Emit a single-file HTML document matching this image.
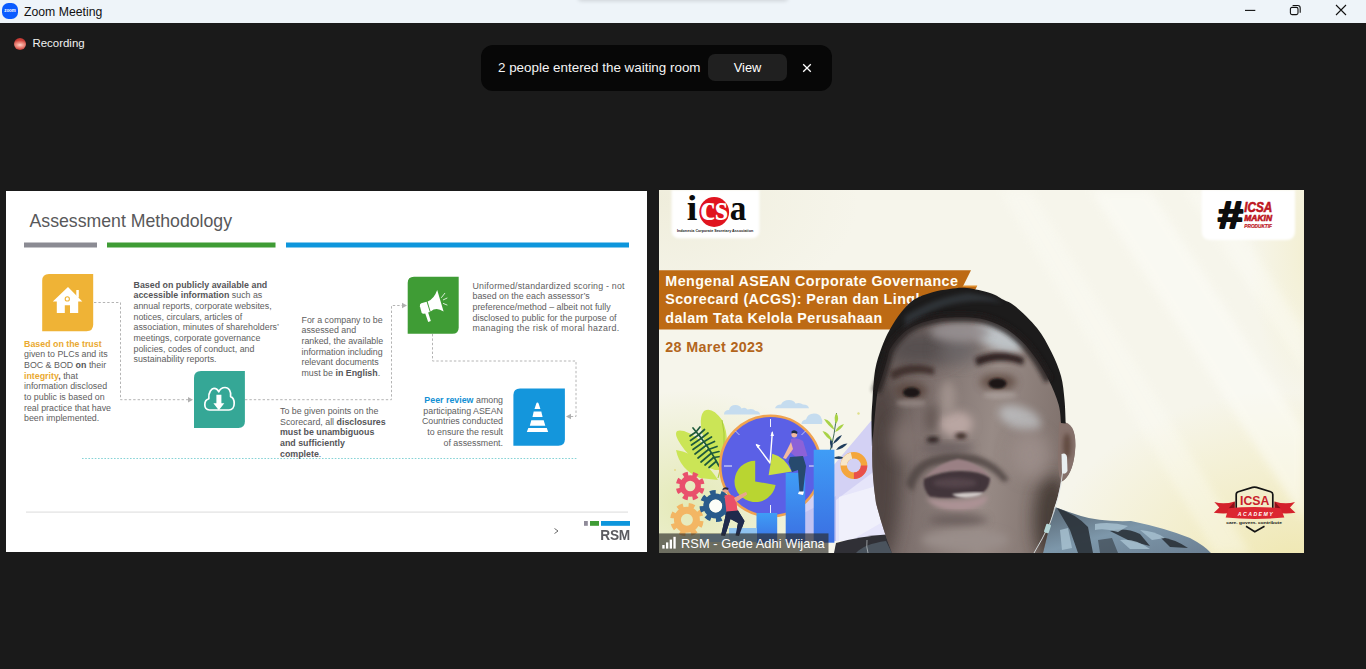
<!DOCTYPE html>
<html lang="en">
<head>
<meta charset="utf-8">
<title>Zoom Meeting</title>
<style>
*{box-sizing:border-box;margin:0;padding:0}
html,body{width:1366px;height:669px;overflow:hidden;background:#1a1a1a;font-family:"Liberation Sans","DejaVu Sans",sans-serif}
#app{position:relative;width:1366px;height:669px;background:#1a1a1a;overflow:hidden}
/* title bar */
#titlebar{position:absolute;left:0;top:0;width:1366px;height:23px;background:#eef4f9;overflow:hidden}
#titlebar .logo{position:absolute;left:2px;top:3px;width:16px;height:16px;border-radius:6.5px;background:#0b5cff;color:#fff;font-size:4.5px;font-weight:bold;line-height:16px;text-align:center;letter-spacing:-0.1px}
#titlebar .ttl{position:absolute;left:24px;top:5px;font-size:12.25px;line-height:15px;color:#111;white-space:nowrap}
#titlebar svg{position:absolute;top:0}
/* recording */
#rec{position:absolute;left:14px;top:37px;height:13px;width:80px}
#rec .dot{position:absolute;left:0;top:0.5px;width:12px;height:12px;border-radius:50%;background:radial-gradient(ellipse 75% 40% at 50% 58%,#ffd6cf 0,#f29a8d 35%,rgba(220,80,70,0) 100%),radial-gradient(circle at 50% 50%,#d9483f 0,#c93c36 60%,#8a2a26 100%)}
#rec .txt{position:absolute;left:18.5px;top:-1px;font-size:11.45px;line-height:15px;color:#f2f2f2;white-space:nowrap}
/* toast */
#toast{position:absolute;left:481px;top:44.5px;width:351px;height:46px;border-radius:12px;background:#070707}
#toast .msg{position:absolute;left:17px;top:14px;font-size:13.4px;line-height:17px;color:#f5f5f5;white-space:nowrap}
#toast .btn{position:absolute;left:227px;top:9.5px;width:79px;height:27px;border-radius:7px;background:#202020;color:#fff;font-size:12.8px;line-height:27px;text-align:center}
#toast svg{position:absolute;left:321px;top:18px}
/* slide */
#slide{position:absolute;left:6px;top:191px;width:641px;height:361px;background:#fff;overflow:hidden}
/* video */
#video{position:absolute;left:659px;top:190px;width:645px;height:363px;background:#f4f2e3;overflow:hidden}
    #slide .t{position:absolute;white-space:nowrap;color:#5e5e60;font-size:8.86px;line-height:10.7px}
    #slide .t b{color:#555558}
    #slide h1{position:absolute;left:23.5px;top:19.8px;font-size:17.7px;line-height:20px;font-weight:normal;color:#58585a;white-space:nowrap}
    #slide .y, #slide b.y{color:#eaa930}
    #slide b.bl{color:#1290d4}
    #slide .rsm{position:absolute;left:594.3px;top:336.6px;font-size:13.7px;line-height:14px;font-weight:bold;color:#5b5b60;letter-spacing:-0.3px;transform:scaleY(1.12);transform-origin:0 0}
</style>
</head>
<body>
<div id="app">
  <div id="titlebar">
    <div class="logo">zoom</div>
    <div class="ttl">Zoom Meeting</div>
    <div style="position:absolute;left:578px;top:-7px;width:210px;height:7px;border-radius:4px;box-shadow:0 1px 4px rgba(0,0,0,0.14)"></div>
    <svg style="left:1240px" width="120" height="23" viewBox="0 0 120 23" fill="none" stroke="#111" stroke-width="1.1">
      <path d="M5 10.4H15.3"/>
      <rect x="50.4" y="7.4" width="7.6" height="7.2" rx="1.6"/>
      <path d="M52.6 5.5H57.8Q60.2 5.5 60.2 7.9V12.8"/>
      <path d="M96 5L106 15M106 5L96 15"/>
    </svg>
  </div>

  <div id="rec"><div class="dot"></div><div class="txt">Recording</div></div>

  <div id="toast">
    <div class="msg">2 people entered the waiting room</div>
    <div class="btn">View</div>
    <svg width="10" height="10" viewBox="0 0 10 10" stroke="#fff" stroke-width="1.3" fill="none"><path d="M1.2 1.2L8.8 8.8M8.8 1.2L1.2 8.8"/></svg>
  </div>

  <div id="slide">
<!--SLIDE-START-->
    <svg style="position:absolute;left:0;top:0" width="641" height="361" viewBox="6 191 641 361">
      <!-- top bars -->
      <rect x="24" y="242.5" width="73" height="5" fill="#8b8b93"/>
      <rect x="107" y="242.5" width="168.5" height="5" fill="#3f9c35"/>
      <rect x="286" y="242.5" width="343" height="5" fill="#0e96dc"/>
      <!-- connectors -->
      <g fill="none" stroke="#b4b4b4" stroke-width="1" stroke-dasharray="2.4 2">
        <path d="M94 302.500H120.500V399.700H188"/>
        <path d="M245 399.700H391.500V305.500H402"/>
        <path d="M432.5 334V361H576V416.5H571"/>
      </g>
      <g fill="#b0b0b0">
        <path d="M188 397L193 399.700L188 402.400Z"/>
        <path d="M402 302.800L407 305.500L402 308.200Z"/>
        <path d="M571 413.800L566 416.500L571 419.200Z"/>
      </g>
      <path d="M82 458.5H578" stroke="#86d3d6" stroke-width="1" stroke-dasharray="1.6 1.6" fill="none"/>
      <!-- icon tiles -->
      <path d="M49 274H93.2V324.5Q93.2 331.2 86.5 331.2H42.2V280.8Q42.2 274 49 274Z" fill="#efb336"/>
      <path d="M201 371H244.900V421.500Q244.900 428 238.400 428H194V378Q194 371 201 371Z" fill="#35a796"/>
      <path d="M414 276.800H458.700V327.500Q458.700 333.800 452.400 333.800H407.700V283Q407.700 276.800 414 276.800Z" fill="#3f9c35"/>
      <path d="M520 388.500H564.900V439.300Q564.900 445.800 558.400 445.800H513.400V395.100Q513.400 388.500 520 388.500Z" fill="#1496dc"/>
      <!-- house -->
      <g fill="#fff">
        <path d="M68 287.100L82.300 301.600H78.200V313H70V305.200H64.800V313H56.800V301.600H52.800Z"/>
        <rect x="76.300" y="290" width="2.500" height="7.500"/>
      </g>
      <circle cx="67.300" cy="298.900" r="2.100" fill="#fff" stroke="#efb336" stroke-width="1.100"/>
      <!-- cloud download -->
      <path d="M209.500 410C206 410 204.800 407 204.800 404.800C204.800 401 207 399.300 208.800 398.800C208 392 212 388.300 214 388.300C216.500 388.300 218 390 218.700 391.800C220 389 222.500 387.500 225 387.500C229 387.500 231.300 391.500 230.600 396.600C233 397.500 234.200 400.500 234.200 403.500C234.200 407.500 232 410 229 410Z" fill="none" stroke="#fff" stroke-width="1.700" stroke-linejoin="round"/>
      <path d="M216.400 394.800H221.400V403.200H224.300L218.800 410.300L213.400 403.200H216.400Z" fill="#fff"/>
      <!-- megaphone -->
      <g fill="#fff">
        <path d="M421.300 303.300L426.600 301.700L429.800 312L424.200 313.800Q422.300 314.200 421.500 312.200L419.900 306.200Q419.500 304 421.300 303.300Z"/>
        <path d="M427.600 301.500Q434.300 298.500 437.200 289.900L443.600 311.600Q436.500 306.500 430.600 311.400Z"/>
        <path d="M425 312.700L427.900 311.800L430.800 321L428.200 322Z"/>
      </g>
      <g stroke="#fff" stroke-width="0.800" fill="none" stroke-linecap="round"><path d="M441.500 297.500L444.800 293.300M443.400 299.800L447 298.100M443.400 303.500L447 305"/></g>
      <!-- cone -->
      <g fill="#fff">
        <path d="M537.400 402.400Q538.300 402.400 538.600 403.500L540.400 409H534.500L536.300 403.500Q536.600 402.400 537.400 402.400Z"/>
        <path d="M533.700 411.600H541.300L542.600 417H532.500Z"/>
        <path d="M531.300 420.200H543.700L545.300 425.700H529.800Z"/>
        <path d="M528.300 428H546.800L548.200 432H526.800Z"/>
      </g>
      <!-- footer -->
      <rect x="26" y="511.500" width="602" height="1.200" fill="#e2e2e2"/>
      <rect x="584" y="521" width="3.800" height="4.800" fill="#8f8b99"/>
      <rect x="590" y="521" width="9" height="4.800" fill="#3f9c35"/>
      <rect x="601" y="521" width="29" height="4.800" fill="#0e96dc"/>
      <path d="M554.500 528.500L558 531L554.500 533.500" stroke="#444" stroke-width="0.8" fill="none"/>
    </svg>
    <h1>Assessment Methodology</h1>
    <div class="t" style="left:18px;top:147.500px"><b class="y">Based on the trust</b><br>given to PLCs and its<br>BOC &amp; BOD <b>on</b> their<br><b class="y">integrity</b><b>,</b> that<br>information disclosed<br>to public is based on<br>real practice that have<br>been implemented.</div>
    <div class="t" style="left:127.500px;top:88.500px"><b>Based on publicly available and</b><br><b>accessible information</b> such as<br>annual reports, corporate websites,<br>notices, circulars, articles of<br>association, minutes of shareholders’<br>meetings, corporate governance<br>policies, codes of conduct, and<br>sustainability reports.</div>
    <div class="t" style="left:295.500px;top:123.500px">For a company to be<br>assessed and<br>ranked, the available<br>information including<br>relevant documents<br>must be <b>in English</b>.</div>
    <div class="t" style="left:274px;top:215px">To be given points on the<br>Scorecard, all <b>disclosures</b><br><b>must be unambiguous</b><br><b>and sufficiently</b><br><b>complete</b>.</div>
    <div class="t" style="left:466.500px;top:89.500px"><span style="letter-spacing:0.2px">Uniformed/standardized scoring - not</span><br>based on the each assessor’s<br>preference/method – albeit not fully<br>disclosed to public for the purpose of<br><span style="letter-spacing:0.32px">managing the risk of moral hazard.</span></div>
    <div class="t" style="right:144px;top:204px;text-align:right"><b class="bl">Peer review</b> among<br>participating ASEAN<br>Countries conducted<br>to ensure the result<br>of assessment.</div>
    <div class="rsm">RSM</div>
<!--SLIDE-END-->
  </div>

  <div id="video">
<!--VIDEO-START-->
    <svg style="position:absolute;left:0;top:0" width="645" height="363" viewBox="659 190 645 363" font-family="'Liberation Sans','DejaVu Sans',sans-serif">
      <defs>
        <linearGradient id="vbg" x1="0" y1="0" x2="1" y2="1">
          <stop offset="0" stop-color="#f1efdf"/><stop offset="0.35" stop-color="#f6f5ea"/><stop offset="0.7" stop-color="#f5f3e1"/><stop offset="1" stop-color="#f3ecc2"/>
        </linearGradient>
        <radialGradient id="glowY" cx="0.5" cy="0.5" r="0.5"><stop offset="0" stop-color="#efe7b0" stop-opacity="1"/><stop offset="0.5" stop-color="#f1eabb" stop-opacity="0.6"/><stop offset="1" stop-color="#f2ebb8" stop-opacity="0"/></radialGradient>
        <radialGradient id="glowG" cx="0.5" cy="0.5" r="0.5"><stop offset="0" stop-color="#e3e9b4" stop-opacity="0.95"/><stop offset="1" stop-color="#e3e9b4" stop-opacity="0"/></radialGradient>
        <radialGradient id="glowT" cx="0.5" cy="0.5" r="0.5"><stop offset="0" stop-color="#efeddb" stop-opacity="0.95"/><stop offset="1" stop-color="#efeddb" stop-opacity="0"/></radialGradient>
        <radialGradient id="glowW" cx="0.5" cy="0.5" r="0.5"><stop offset="0" stop-color="#fbfaf4" stop-opacity="0.95"/><stop offset="1" stop-color="#fbfaf4" stop-opacity="0"/></radialGradient>
        <linearGradient id="bar" x1="0" y1="0" x2="0" y2="1"><stop offset="0" stop-color="#3f9df6"/><stop offset="1" stop-color="#3b6fe2"/></linearGradient>
        <filter id="b1" x="-20%" y="-20%" width="140%" height="140%"><feGaussianBlur stdDeviation="1"/></filter>
        <filter id="b2" x="-30%" y="-30%" width="160%" height="160%"><feGaussianBlur stdDeviation="2.2"/></filter>
        <filter id="b4" x="-40%" y="-40%" width="180%" height="180%"><feGaussianBlur stdDeviation="4.5"/></filter>
        <filter id="b8" x="-50%" y="-50%" width="200%" height="200%"><feGaussianBlur stdDeviation="8"/></filter>
        <clipPath id="vclip"><rect x="659" y="190" width="645" height="363"/></clipPath>
      </defs>
      <g clip-path="url(#vclip)">
      <rect x="659" y="190" width="645" height="363" fill="#f6f5eb"/>
      <ellipse cx="659" cy="200" rx="200" ry="120" fill="url(#glowT)"/>
      <ellipse cx="1295" cy="565" rx="250" ry="175" fill="url(#glowY)"/>
      <ellipse cx="1310" cy="250" rx="60" ry="150" fill="url(#glowY)" opacity="0.450"/>
      <ellipse cx="690" cy="505" rx="150" ry="115" fill="url(#glowG)"/>
      <g filter="url(#b4)" fill="#fdfdf8" opacity="0.550">
        <path d="M1090 190H1150L1304 430V520Z"/>
        <path d="M1000 190H1030L1250 553H1215Z" opacity="0.600"/>
        <path d="M1185 190H1215L1304 330V370Z" opacity="0.700"/>
      </g>
      <!--VBG-END-->
      <!-- icsa logo (top-left) -->
      <path d="M671.600 190H759.400V230.500Q759.400 238.300 751.500 238.300H679.500Q671.600 238.300 671.600 230.500Z" fill="#ffffff" filter="url(#b1)"/>
      <circle cx="714.200" cy="212" r="14.900" fill="#e0141f"/>
      <g font-family="'Liberation Serif','DejaVu Serif',serif" font-weight="bold" font-size="36">
        <text x="686.800" y="220.300" fill="#0b0b0b" textLength="10.600" lengthAdjust="spacingAndGlyphs">i</text>
        <text x="700.300" y="220.300" fill="#ffffff" textLength="27.800" lengthAdjust="spacingAndGlyphs">cs</text>
        <text x="729.700" y="220.300" fill="#0b0b0b" textLength="16.600" lengthAdjust="spacingAndGlyphs">a</text>
      </g>
      <text x="677" y="232" font-size="3.700" font-weight="bold" fill="#222" textLength="76.200" lengthAdjust="spacingAndGlyphs">Indonesia Corporate Secretary Association</text>
      <!-- hashtag box (top-right) -->
      <path d="M1201.700 190H1295V231Q1295 240 1286 240H1210.700Q1201.700 240 1201.700 231Z" fill="#ffffff" filter="url(#b1)"/>
      <g font-weight="bold" font-style="italic">
        <text x="1217.300" y="227.900" font-size="37" fill="#0d0d0d" textLength="25" lengthAdjust="spacingAndGlyphs" stroke="#0d0d0d" stroke-width="1.900" stroke-linejoin="round">#</text>
        <text x="1244.300" y="211.900" font-size="14.400" fill="#bd1622" textLength="28" lengthAdjust="spacingAndGlyphs" stroke="#bd1622" stroke-width="0.600">ICSA</text>
        <text x="1244.300" y="220.800" font-size="8.800" fill="#bd1622" textLength="27.700" lengthAdjust="spacingAndGlyphs" stroke="#bd1622" stroke-width="0.600">MAKIN</text>
        <text x="1244.300" y="227.500" font-size="5" fill="#bd1622" textLength="27.700" lengthAdjust="spacingAndGlyphs" stroke="#bd1622" stroke-width="0.200">PRODUKTIF</text>
      </g>
      <!-- ICSA academy badge (bottom-right) -->
      <path d="M1236.200 508V494.500Q1236.200 492.300 1238.300 491.700L1252.500 487.400Q1254.500 486.800 1256.500 487.400L1270.700 491.700Q1272.800 492.300 1272.800 494.500V508" fill="none" stroke="#141414" stroke-width="1.700" stroke-linejoin="round"/>
      <text x="1240" y="505.100" font-size="13.400" font-weight="bold" fill="#c8202a" textLength="29.300" lengthAdjust="spacingAndGlyphs">ICSA</text>
      <path d="M1214.300 502Q1224 505 1234.700 501.400L1234.700 512.500Q1224 514.500 1213.800 512.800L1219.300 507.600Z" fill="#d4212b"/>
      <path d="M1295 502Q1285.300 505 1274.600 501.400L1274.600 512.500Q1285.300 514.500 1295.500 512.800L1290 507.600Z" fill="#d4212b"/>
      <path d="M1234.700 501.400L1228.500 508.500L1234.700 511Z" fill="#8a1118"/>
      <path d="M1274.600 501.400L1280.800 508.500L1274.600 511Z" fill="#8a1118"/>
      <path d="M1228.500 508.300Q1254.500 505.800 1280.800 508.300L1284.300 517.600Q1254.500 520.300 1225.700 517.600Z" fill="#dc2631"/>
      <text x="1237.800" y="516.400" font-size="5.200" font-weight="bold" font-style="italic" fill="#fff" textLength="35" lengthAdjust="spacing">ACADEMY</text>
      <text x="1226.300" y="523.500" font-size="3.800" font-weight="bold" fill="#141414" textLength="55.600" lengthAdjust="spacingAndGlyphs">care. govern. contribute</text>
      <path d="M1246 526.300L1254.800 531.700L1264.500 526.300" fill="none" stroke="#141414" stroke-width="1.600" stroke-linejoin="miter"/>
      <!-- orange title banner -->
      <path d="M659 270.200H971L963 286.200H977L955 329.500H659Z" fill="#bd6a14"/>
      <path d="M963.200 285.600H977.300L976.600 287H962.500Z" fill="#dd8d2c"/>
      <g font-weight="bold" font-size="14.300" fill="#fffdf6" letter-spacing="0.420">
        <text x="665.300" y="285.700">Mengenal ASEAN Corporate Governance</text>
        <text x="665.300" y="304.100">Scorecard (ACGS): Peran dan Lingkup</text>
        <text x="665.300" y="322.800">dalam Tata Kelola Perusahaan</text>
      </g>
      <text x="665.300" y="352.300" font-weight="bold" font-size="14.300" fill="#b3651c" letter-spacing="0.350">28 Maret 2023</text>
<!--ILLUS-START-->
      <!-- illustration -->
      <g>
        <!-- lavender paper/mountain -->
        <path d="M871 421L893 421V541H800V505Z" fill="#d3d1f4"/>
        <path d="M836 500L876 470L893 500V541H836Z" fill="#e6e5fa"/>
        <path d="M839 497L873 487L886 520L850 541H839Z" fill="#f3f2fb" opacity="0.800"/>
        <path d="M800 541L800 515L836 496V541Z" fill="#c2c3f2"/>
        <!-- clouds -->
        <g fill="#c5dcef">
          <path d="M724 414.500Q724 410 729 410Q730 405 735.500 405Q740 405 741.500 408.500Q745 406.500 747.500 409.500Q753 408 755.500 411Q760 411 760 414.500Z"/>
          <path d="M775 408.300Q776 404.500 781 404.500Q783 400 789 400Q794 400 795.500 403.500Q800 402 803 404.500Q808.500 404.500 809 408.300Z"/>
          <path d="M801.500 424Q801.500 420 806 419.500Q807.500 413.500 814 413.500Q820 413.500 821.500 418.500Q823 420.500 822 424Z"/>
        </g>
        <!-- big light leaves -->
        <g fill="#cbe556">
          <path d="M715 470Q690 462 678 440Q672 428 684 431Q700 436 708 452Q696 420 704 411Q712 406 722 420Q732 440 722 470Z"/>
          <path d="M700 478Q680 470 676 450Q690 452 702 462Q712 470 718 480Z"/>
        </g>
        <path d="M722 420Q728 445 718 478" stroke="#a8cc3a" stroke-width="1" fill="none"/>
        <!-- fern -->
        <g stroke="#1e5a3c" stroke-width="1.700" fill="none" stroke-linecap="round">
          <path d="M693 428Q708 445 719 466"/>
          <path d="M696 432L690 436M698.500 435L690.500 440.500M701 438.500L691.500 445M703.500 442L693 449.500M706 445.500L695 454M708.500 449.500L698 458M711 453.500L701 462M713.500 457.500L705 465M716 461.500L709 467.500"/>
          <path d="M696 432L700 427M698.500 435L704.500 429.500M701 438.500L708 433M703.500 442L711.500 437M706 445.500L714.500 441.500M708.500 449.500L717 446.500M711 453.500L719 451.500M713.500 457.500L720.500 456.500"/>
        </g>
        <!-- right plant -->
        <path d="M830 451Q835 435 836.500 413" stroke="#2a5a4a" stroke-width="0.900" fill="none"/>
        <g fill="#a9d246">
          <path d="M836.500 413Q833 418 836 424Q840 419 836.500 413Z"/>
          <path d="M834.500 430Q828 426 824 419Q831 420 834.500 430Z"/>
          <path d="M835 432Q841 430 844 424Q838 425 835 432Z"/>
          <path d="M832.500 441Q826 438 822.500 431Q829 432 832.500 441Z"/>
        </g>
        <g fill="#1f3d5c">
          <path d="M833 444Q839 441 842 435Q836 436.500 833 444Z"/>
          <path d="M836 450Q843 449 847.500 443.500Q840 444 836 450Z"/>
          <path d="M832 449Q829 444 830.500 439Q834 443 832 449Z"/>
          <path d="M833 458Q839 460 844 458Q839 454.500 833 458Z"/>
        </g>
        <!-- clock -->
        <circle cx="770.500" cy="466" r="50.300" fill="#5b60e6" stroke="#f0a350" stroke-width="2.600"/>
        <g stroke="#ffffff" stroke-width="1" opacity="0.900">
          <path d="M770.500 419V427M770.500 505V513M724 466H732M809 466H817"/>
          <path d="M735.500 431L739.500 435M805.500 431L801.500 435" stroke-width="0.700"/>
        </g>
        <path d="M770 463L772.300 432.600M770 463L756.500 444.800" stroke="#ffffff" stroke-width="1.400" stroke-linecap="round" fill="none"/>
        <path d="M770.500 436L772.300 431L774 436Z M757.500 448L755.800 443.800L760.500 445.500Z" fill="#fff"/>
        <!-- pie -->
        <path d="M755.200 481.400L755.200 460.700A20.700 20.700 0 1 0 775.600 485Z" fill="#b9d531"/>
        <path d="M768.600 475.300L772.300 453.800Q785 457 791.800 471.600Z" fill="#c9de45"/>
        <!-- bars -->
        <rect x="756.500" y="513" width="20.700" height="30" fill="url(#bar)"/>
        <rect x="785.700" y="472.800" width="19.500" height="70" fill="url(#bar)"/>
        <rect x="813.700" y="449.700" width="20.700" height="93" fill="url(#bar)"/>
        <!-- sitting figure -->
        <circle cx="794.300" cy="434.500" r="2.900" fill="#f2b9a0"/>
        <path d="M791.500 431.500Q794.500 429 797.500 432L797 434Q794 432.500 791.500 433.500Z" fill="#1f2a44"/>
        <path d="M791 439Q797 437 803 441L807.500 456L797 458L790 452Z" fill="#8c62d8"/>
        <path d="M791 442L783 458L786 459L793 449Z" fill="#f2b9a0"/>
        <path d="M790 457L803 456L806 466L803 492L799.500 492L798 470L792 472L788.500 462Z" fill="#274a6e"/>
        <path d="M799 491.500L804 491.500L803 495L798 494Z" fill="#fff"/>
        <!-- pushing figure -->
        <circle cx="725.500" cy="490.500" r="2.700" fill="#e9a58c"/>
        <path d="M722.500 489Q724.500 486 728.500 488L728 490Q725 488.500 722.500 490.500Z" fill="#2a2a3a"/>
        <path d="M724.500 495.500Q731 493.500 735.500 497.500L737.500 511L726.500 512.500Z" fill="#ea5068"/>
        <path d="M734 498L746 492L747 494.500L736 502Z" fill="#e9a58c"/>
        <path d="M726.500 511.500L738 510.500L744.500 521L739 536L735.500 535.500L738 523L730.500 519L725 536L721 535.500Z" fill="#1f2a4c"/>
        <!-- gears -->
        <rect x="700" y="534" width="36" height="8" fill="#a9d2f3"/>
        <rect x="729" y="528" width="28" height="14" fill="#8fc3f0"/>
        <g>
          <circle cx="690.2" cy="486" r="7.95" fill="none" stroke="#e9506c" stroke-width="5.50"/>
          <circle cx="690.2" cy="486" r="12.00" fill="none" stroke="#e9506c" stroke-width="4.80" stroke-dasharray="4.90 4.52" transform="rotate(10 690.2 486)"/>
        </g>
        <g>
          <circle cx="686.9" cy="519.7" r="9.50" fill="none" stroke="#f3b664" stroke-width="7.00"/>
          <circle cx="686.9" cy="519.7" r="14.30" fill="none" stroke="#f3b664" stroke-width="4.80" stroke-dasharray="5.84 5.39" transform="rotate(5 686.9 519.7)"/>
        </g>
        <g>
          <circle cx="715.7" cy="506" r="9.40" fill="none" stroke="#2a5b8c" stroke-width="6.00"/>
          <circle cx="715.7" cy="506" r="13.70" fill="none" stroke="#2a5b8c" stroke-width="4.80" stroke-dasharray="5.60 5.16" transform="rotate(20 715.7 506)"/>
          <circle cx="715.7" cy="506" r="6.40" fill="#fdfdf8"/>
        </g>
        <path d="M724.500 495.500Q731 493.500 735.500 497.500L737.500 511L726.500 512.500Z" fill="#ea5068"/>
        <path d="M726.500 511.500L738 510.500L744.500 521L739 536L735.500 535.500L738 523L730.500 519L725 536L721 535.500Z" fill="#1f2a4c"/>
        <path d="M734 498L746 492L747 494.500L736 502Z" fill="#e9a58c"/>
        <!-- donut chart -->
        <circle cx="853.900" cy="465.500" r="10.200" fill="none" stroke="#f4a63c" stroke-width="6.400"/>
        <path d="M853.900 475.700A10.200 10.200 0 0 0 864.100 465.500" fill="none" stroke="#e8504c" stroke-width="6.400"/>
        <path d="M843.700 465.500A10.200 10.200 0 0 1 851.500 455.600" fill="none" stroke="#f7e6c8" stroke-width="6.400"/>
        <!-- tiny dots -->
        <circle cx="858.500" cy="413.500" r="1.200" fill="#dfe08a"/><circle cx="675" cy="470" r="1" fill="#e6d98a"/><circle cx="885" cy="521" r="0.900" fill="#d8d860"/>
      </g>
<!--ILLUS-END-->
<!--PERSON-START-->
      <!-- webcam foreground -->
      <defs>
        <linearGradient id="skin" x1="0" y1="0" x2="1" y2="0.150">
          <stop offset="0" stop-color="#5e5350"/><stop offset="0.300" stop-color="#7c6f6c"/><stop offset="0.650" stop-color="#988b86"/><stop offset="1" stop-color="#80726d"/>
        </linearGradient>
        <linearGradient id="shirt" x1="0" y1="0" x2="1" y2="1"><stop offset="0" stop-color="#55636f"/><stop offset="0.500" stop-color="#7d97aa"/><stop offset="1" stop-color="#6c8093"/></linearGradient>
        <clipPath id="faceclip"><path d="M874.0 392.0C875.0 388.7 878.0 378.7 880.0 372.0C882.0 365.3 883.3 358.3 886.0 352.0C888.7 345.7 892.0 339.0 896.0 334.0C900.0 329.0 904.3 325.7 910.0 322.0C915.7 318.3 923.3 314.3 930.0 312.0C936.7 309.7 941.7 308.5 950.0 308.0C958.3 307.5 970.8 307.2 980.0 309.0C989.2 310.8 997.3 314.5 1005.0 319.0C1012.7 323.5 1019.8 329.8 1026.0 336.0C1032.2 342.2 1037.3 348.7 1042.0 356.0C1046.7 363.3 1050.8 372.0 1054.0 380.0C1057.2 388.0 1059.7 396.8 1061.0 404.0C1062.3 411.2 1061.8 419.8 1062.0 423.0Q1077 424 1075 450Q1073 476 1061 482Q1058 498 1054 508L1043 553H892Q883 530 876 503Q871 470 872.5 440Z"/></clipPath>
      </defs>
      <g>
        <!-- shirt / shoulders -->
        <path d="M1055 507Q1068 512 1081 516Q1100 522 1131 521Q1165 528 1190 538Q1205 546 1211 553H1040Z" fill="url(#shirt)"/>
        <g fill="#2b3239" opacity="0.900">
          <path d="M1057 508Q1076 514 1088 527L1093 553H1078L1070 530Z"/>
          <path d="M1110 531Q1125 527 1140 534L1150 546L1130 541Z"/>
          <path d="M1160 537Q1175 539 1188 548L1170 547Z"/>
          <path d="M1098 540L1112 538L1118 553H1100Z" opacity="0.600"/>
        </g>
        <g fill="#a9c3d2" opacity="0.800">
          <path d="M1095 524Q1110 521 1128 526L1118 532Q1105 528 1095 530Z"/>
          <path d="M1140 530Q1155 531 1165 538L1152 540Z"/>
          <path d="M1120 540Q1135 538 1150 549L1130 549Z"/>
          <path d="M1060 530L1068 528L1072 548L1062 550Z"/>
        </g>
        <path d="M834 553L836 543Q860 536 893 534L905 553Z" fill="#303036"/>
        <path d="M856 553Q864 544 886 541L892 553Z" fill="#56626e" opacity="0.700"/>
        <!-- face base -->
        <path d="M874.0 392.0C875.0 388.7 878.0 378.7 880.0 372.0C882.0 365.3 883.3 358.3 886.0 352.0C888.7 345.7 892.0 339.0 896.0 334.0C900.0 329.0 904.3 325.7 910.0 322.0C915.7 318.3 923.3 314.3 930.0 312.0C936.7 309.7 941.7 308.5 950.0 308.0C958.3 307.5 970.8 307.2 980.0 309.0C989.2 310.8 997.3 314.5 1005.0 319.0C1012.7 323.5 1019.8 329.8 1026.0 336.0C1032.2 342.2 1037.3 348.7 1042.0 356.0C1046.7 363.3 1050.8 372.0 1054.0 380.0C1057.2 388.0 1059.7 396.8 1061.0 404.0C1062.3 411.2 1061.8 419.8 1062.0 423.0Q1077 424 1075 450Q1073 476 1061 482Q1058 498 1054 508L1043 553H892Q883 530 876 503Q871 470 872.5 440Z" fill="url(#skin)"/>
        <g clip-path="url(#faceclip)">
          <!-- broad shading -->
          <ellipse cx="882" cy="470" rx="18" ry="90" fill="#4c403c" filter="url(#b8)" opacity="0.850"/>
          <ellipse cx="1052" cy="520" rx="18" ry="45" fill="#453a36" filter="url(#b8)" opacity="0.950"/>
          <ellipse cx="922" cy="348" rx="38" ry="18" fill="#57504f" filter="url(#b8)"/>
          <ellipse cx="960" cy="350" rx="22" ry="14" fill="#6c6668" filter="url(#b8)" opacity="0.900"/>
          <!-- forehead highlight -->
          <ellipse cx="1000" cy="337" rx="26" ry="13" fill="#c0c6ca" filter="url(#b4)" opacity="0.950" transform="rotate(22 1000 337)"/>
          <ellipse cx="960" cy="332" rx="30" ry="10" fill="#969092" filter="url(#b4)" opacity="0.900"/>
          <!-- cheeks highlights -->
          <ellipse cx="1020" cy="418" rx="22" ry="11" fill="#c6cace" filter="url(#b4)" opacity="0.700" transform="rotate(20 1020 418)"/>
          <ellipse cx="1030" cy="455" rx="20" ry="24" fill="#9c8e8a" filter="url(#b8)" opacity="0.900"/>
          <ellipse cx="905" cy="440" rx="14" ry="20" fill="#847672" filter="url(#b8)" opacity="0.800"/>
          <!-- nose -->
          <ellipse cx="956" cy="424" rx="17" ry="13" fill="#b9a6a2" filter="url(#b4)"/>
          <ellipse cx="948" cy="398" rx="8" ry="17" fill="#a3948f" filter="url(#b4)" opacity="0.900"/>
          <ellipse cx="933" cy="440" rx="6.500" ry="3.600" fill="#2e2220" filter="url(#b2)"/>
          <ellipse cx="961" cy="436" rx="6" ry="3.200" fill="#3a2a26" filter="url(#b2)"/>
          <ellipse cx="931" cy="418" rx="6" ry="14" fill="#635652" filter="url(#b4)" opacity="0.850"/>
          <ellipse cx="948" cy="448" rx="26" ry="5" fill="#64585a" filter="url(#b4)" opacity="0.800"/>
          <!-- brows & eye sockets -->
          <path d="M890 372Q910 360 934 368L934 375Q912 369 892 380Z" fill="#3a2c28" filter="url(#b2)" opacity="0.850"/>
          <path d="M975 358Q1000 347 1024 358L1023 365Q1000 356 977 366Z" fill="#2a1f1c" filter="url(#b2)" opacity="0.950"/>
          <ellipse cx="911" cy="391" rx="16" ry="8" fill="#57433b" filter="url(#b4)" opacity="0.900"/>
          <ellipse cx="998" cy="382" rx="18" ry="8" fill="#5c473e" filter="url(#b4)" opacity="0.900"/>
          <ellipse cx="911.500" cy="392.500" rx="8.500" ry="5" fill="#1f1614" filter="url(#b1)"/>
          <ellipse cx="997.500" cy="383.500" rx="9" ry="5.200" fill="#1f1614" filter="url(#b1)"/>
          <ellipse cx="911" cy="403" rx="15" ry="3.500" fill="#9c908c" filter="url(#b2)" opacity="0.700"/>
          <ellipse cx="1000" cy="395" rx="17" ry="3.500" fill="#b0a6a2" filter="url(#b2)" opacity="0.700"/>
          <!-- mustache -->
          <path d="M906 484Q912 462 935 456Q952 451 975 455Q998 462 1009 480L1003 482Q990 466 970 463Q945 461 928 468Q916 476 913 492Z" fill="#514644" filter="url(#b2)" opacity="0.850"/>
          <!-- lips/mouth -->
          <path d="M924 478Q940 462 958 459Q978 462 990 477Q975 470 958 471Q940 471 924 478Z" fill="#9a8084" filter="url(#b1)"/>
          <path d="M924 479Q945 470 962 471Q980 471 990 478Q990 492 975 496Q950 500 930 497Q922 488 924 479Z" fill="#43353b" filter="url(#b1)"/>
          <path d="M952 494Q968 491.500 984 492.500Q979 497.500 966 498Q956 498 952 494Z" fill="#cfc8c6" filter="url(#b1)"/>
          <ellipse cx="955" cy="483" rx="22" ry="5" fill="#5a4850" filter="url(#b2)" opacity="0.800"/>
          <path d="M926 498Q957 504 988 496Q986 508 962 511Q935 511 926 498Z" fill="#ac9294" filter="url(#b2)"/>
          <ellipse cx="958" cy="520" rx="30" ry="6" fill="#665a58" filter="url(#b4)" opacity="0.850"/>
          <ellipse cx="965" cy="540" rx="44" ry="10" fill="#9a8e8a" filter="url(#b4)"/>
        </g>
        <!-- ear -->
        <path d="M1059 422Q1076 420 1075.500 446Q1074 474 1061 482Q1057 470 1058 450Z" fill="#86726c"/>
        <ellipse cx="1067" cy="446" rx="4" ry="13" fill="#5a4238" filter="url(#b2)" opacity="0.800"/>
        <!-- earbud + cable -->
        <path d="M1061.500 454Q1066 452 1067 457L1067.500 471Q1065.500 475 1062 473Z" fill="#e9eff1"/>
        <path d="M1062.500 473Q1060 497 1050 523Q1042 540 1034 553" stroke="#dfe6e8" stroke-width="1" fill="none" opacity="0.900"/>
        <rect x="1045" y="524" width="5" height="9" rx="1" fill="#b4d6d6" transform="rotate(18 1047.500 528.500)"/>
        <path d="M867 540Q866 547 868 553" stroke="#cfd6d8" stroke-width="0.800" fill="none" opacity="0.800"/>
        <!-- hair -->
        <path d="M872.0 447.0C871.9 442.5 871.4 427.8 871.5 420.0C871.6 412.2 871.9 408.4 872.5 400.0C873.1 391.6 873.7 378.3 875.2 369.6C876.7 360.9 879.1 354.6 881.5 348.0C883.9 341.4 886.3 335.9 889.6 330.0C892.9 324.1 897.2 317.4 901.2 312.3C905.2 307.2 908.7 303.0 913.8 299.7C918.9 296.4 925.7 294.3 931.7 292.5C937.7 290.7 943.7 289.8 949.6 289.0C955.5 288.2 960.3 287.3 967.0 288.0C973.7 288.7 984.0 291.1 990.0 293.0C996.0 294.9 998.8 297.2 1003.0 299.5C1007.2 301.8 1009.8 301.8 1015.5 306.5C1021.2 311.2 1031.0 320.4 1037.0 328.0C1043.0 335.6 1047.4 344.0 1051.4 352.0C1055.4 360.0 1058.8 368.0 1061.0 376.0C1063.2 384.0 1063.7 392.1 1064.5 400.0C1065.3 407.9 1065.5 419.6 1065.7 423.5L1061.0 423.0C1060.6 419.9 1060.6 411.5 1058.6 404.4C1056.6 397.3 1052.6 387.9 1049.0 380.5C1045.4 373.1 1041.5 366.5 1037.0 360.0C1032.5 353.5 1027.7 347.0 1022.0 341.5C1016.3 336.0 1010.1 330.8 1003.0 327.0C995.9 323.2 988.5 320.1 979.6 318.5C970.7 316.9 957.6 317.2 949.6 317.5C941.6 317.8 937.7 318.6 931.7 320.0C925.7 321.4 918.9 323.5 913.8 326.0C908.7 328.5 905.1 331.2 901.2 335.0C897.3 338.8 892.9 344.2 890.5 348.5C888.1 352.8 888.4 355.6 886.9 360.6C885.4 365.6 883.1 373.4 881.5 378.6C879.9 383.8 878.7 385.1 877.5 392.0C876.3 398.9 875.4 410.8 874.5 420.0C873.6 429.2 872.4 442.5 872.0 447.0Z" fill="#1c1b1b"/>
        <path d="M905 316Q935 297 968 293Q990 295 1003 303Q975 298 945 306Q920 314 905 330Z" fill="#3a4248" filter="url(#b2)" opacity="0.600"/>
        <path d="M876.0 392.0C876.9 389.8 879.7 383.8 881.5 378.6C883.3 373.4 885.4 365.6 886.9 360.6C888.4 355.6 888.1 352.8 890.5 348.5C892.9 344.2 897.3 338.8 901.2 335.0C905.1 331.2 908.7 328.5 913.8 326.0C918.9 323.5 925.7 321.4 931.7 320.0C937.7 318.6 941.6 317.8 949.6 317.5C957.6 317.2 970.7 316.9 979.6 318.5C988.5 320.1 995.9 323.2 1003.0 327.0C1010.1 330.8 1016.3 336.0 1022.0 341.5C1027.7 347.0 1032.5 353.5 1037.0 360.0C1041.5 366.5 1047.0 377.1 1049.0 380.5" fill="none" stroke="#241f1e" stroke-width="9" filter="url(#b2)" opacity="0.800"/>
      </g>
<!--PERSON-END-->
<!--LABEL-START-->
      <!-- name label -->
      <rect x="659" y="533.400" width="169.500" height="20" fill="#2a2a27" fill-opacity="0.660"/>
      <g fill="#ffffff">
        <rect x="662.300" y="545" width="2.300" height="3.600"/>
        <rect x="666" y="542.400" width="2.300" height="6.200"/>
        <rect x="669.700" y="539.600" width="2.300" height="9"/>
        <rect x="673.400" y="536.800" width="2.300" height="11.800"/>
      </g>
      <text x="681" y="548.200" font-size="12.800" fill="#ffffff" textLength="143.700" lengthAdjust="spacing">RSM - Gede Adhi Wijana</text>
<!--LABEL-END-->
      </g>
    </svg>
<!--VIDEO-END-->
  </div>
</div>
</body>
</html>
